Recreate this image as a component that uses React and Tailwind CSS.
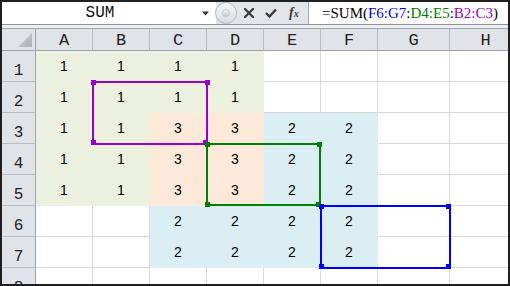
import React from "react";

const FILL = {
  g: "bg-[#ebf1de] border-[#ebf1de]",
  o: "bg-[#fde9d9] border-[#fde9d9]",
  b: "bg-[#daeef3] border-[#daeef3]",
  w: "bg-white border-[#d9d9d9]",
};

const ROWS = [
  ["g1", "g1", "g1", "g1", "w", "w", "w", "w"],
  ["g1", "g1", "g1", "g1", "w", "w", "w", "w"],
  ["g1", "g1", "o3", "o3", "b2", "b2", "w", "w"],
  ["g1", "g1", "o3", "o3", "b2", "b2", "w", "w"],
  ["g1", "g1", "o3", "o3", "b2", "b2", "w", "w"],
  ["w", "w", "b2", "b2", "b2", "b2", "w", "w"],
  ["w", "w", "b2", "b2", "b2", "b2", "w", "w"],
  ["w", "w", "w", "w", "w", "w", "w", "w"],
];

const COLS = ["A", "B", "C", "D", "E", "F", "G", "H"];

export default function App() {
  return (
    <div className="w-[510px] h-[286px] border-2 border-[#1f1f1f] overflow-hidden bg-white">
      <div className="relative w-[506px] h-[282px] overflow-hidden flex flex-col">
        {/* formula bar */}
        <div className="flex h-[22px] shrink-0">
          <div className="flex w-[214px] bg-white">
            <div className="w-[196px] flex items-center justify-center text-[16px] leading-none text-[#111] [font-family:Liberation_Mono,monospace]">
              SUM
            </div>
            <div className="flex-1 flex items-center pl-[4px]">
              <svg width="8" height="5" viewBox="0 0 8 5">
                <path d="M0 0.5 H7 L3.5 4.5 Z" fill="#333" />
              </svg>
            </div>
          </div>
          <div className="w-[92px] bg-[#e1e4e8] flex items-center">
            <div className="-ml-[1px] w-[22px] h-[22px] rounded-full border border-[#b4b8be] bg-gradient-to-b from-[#f6f7f9] to-[#d9dde2] flex items-center justify-center">
              <div className="w-[8px] h-[8px] rounded-full bg-gradient-to-b from-[#f0f1f3] to-[#c9cdd2] border border-[#c2c6cb]" />
            </div>
            <svg className="ml-[7px]" width="10" height="10" viewBox="0 0 10 10">
              <path d="M1 1 L9 9 M9 1 L1 9" stroke="#3a3a3a" strokeWidth="2.2" strokeLinecap="square" />
            </svg>
            <svg className="ml-[11px]" width="12" height="10" viewBox="0 0 12 10">
              <path d="M1 5 L4.5 8.5 L11 1.5" stroke="#3a3a3a" strokeWidth="2.4" fill="none" />
            </svg>
            <div className="ml-[12px] text-[14px] leading-none italic font-bold text-[#3a3a3a] [font-family:Liberation_Serif,serif]">
              f<span className="text-[10px]">x</span>
            </div>
          </div>
          <div className="flex-1 bg-white border-l border-[#a6aab0] pl-[13px] flex items-center text-[15px] leading-none text-black [font-family:Liberation_Serif,serif] whitespace-nowrap">
            =SUM(<span className="text-[#0000ff]">F6:G7</span>:<span className="text-[#008000]">D4:E5</span>:<span className="text-[#9900cc]">B2:C3</span>)
          </div>
        </div>
        {/* separator */}
        <div className="h-[5px] shrink-0 border-t border-b border-t-[#8e939a] border-b-[#a3a8ae] bg-[#eceef1]" />
        {/* grid */}
        <div className="grid grid-cols-[34px_57px_57px_57px_57px_57px_57px_72px_72px] grid-rows-[22px_repeat(8,31px)] w-[520px]">
          <div className="bg-[#e0e3e8] border-r border-b border-[#9ea3a9] flex items-end justify-end pr-[3px] pb-[3px]">
            <svg width="14" height="14" viewBox="0 0 14 14">
              <defs>
                <linearGradient id="tri" x1="0" y1="0" x2="1" y2="1">
                  <stop offset="0" stopColor="#c9ccd0" />
                  <stop offset="1" stopColor="#aeb2b7" />
                </linearGradient>
              </defs>
              <path d="M14 0 L14 14 L0 14 Z" fill="url(#tri)" />
            </svg>
          </div>
          {COLS.map((c) => (
            <div
              key={c}
              className="bg-[#e0e3e8] border-r border-b border-r-[#b9bdc2] border-b-[#9ea3a9] flex items-end justify-center pb-[1px] text-[17px] leading-none text-[#222] [font-family:Liberation_Mono,monospace]"
            >
              {c}
            </div>
          ))}
          {ROWS.map((row, ri) => (
            <React.Fragment key={ri}>
              <div className="bg-[#e0e3e8] border-r border-b border-r-[#9ea3a9] border-b-[#b9bdc2] flex items-end justify-center pb-[2px] text-[16px] leading-none text-[#222] [font-family:Liberation_Mono,monospace]">
                {ri + 1}
              </div>
              {row.map((cell, ci) => (
                <div
                  key={ci}
                  className={`${FILL[cell[0]]} border-r border-b flex items-center justify-center text-[14px] leading-none text-black [font-family:Liberation_Sans,Arial,sans-serif]`}
                >
                  {cell.slice(1)}
                </div>
              ))}
            </React.Fragment>
          ))}
        </div>

        {/* range outlines */}
        <div className="absolute left-[90px] top-[79px] w-[116px] h-[64px] border-2 border-[#9900cc]" />
        <div className="absolute left-[89px] top-[78px] w-[5px] h-[5px] bg-[#9900cc]" />
        <div className="absolute left-[203px] top-[78px] w-[5px] h-[5px] bg-[#9900cc]" />
        <div className="absolute left-[89px] top-[138px] w-[5px] h-[5px] bg-[#9900cc]" />
        <div className="absolute left-[201px] top-[138px] w-[5px] h-[5px] bg-[#9900cc]" />

        <div className="absolute left-[204px] top-[141px] w-[115px] h-[63px] border-2 border-[#008000]" />
        <div className="absolute left-[203px] top-[140px] w-[5px] h-[5px] bg-[#008000]" />
        <div className="absolute left-[315px] top-[140px] w-[5px] h-[5px] bg-[#008000]" />
        <div className="absolute left-[203px] top-[200px] w-[5px] h-[5px] bg-[#008000]" />
        <div className="absolute left-[314px] top-[200px] w-[5px] h-[5px] bg-[#008000]" />

        <div className="absolute left-[318px] top-[203px] w-[131px] h-[64px] border-2 border-[#0000ff]" />
        <div className="absolute left-[317px] top-[202px] w-[5px] h-[5px] bg-[#0000ff]" />
        <div className="absolute left-[444px] top-[202px] w-[5px] h-[5px] bg-[#0000ff]" />
        <div className="absolute left-[317px] top-[262px] w-[5px] h-[5px] bg-[#0000ff]" />
        <div className="absolute left-[444px] top-[262px] w-[5px] h-[5px] bg-[#0000ff]" />
      </div>
    </div>
  );
}
